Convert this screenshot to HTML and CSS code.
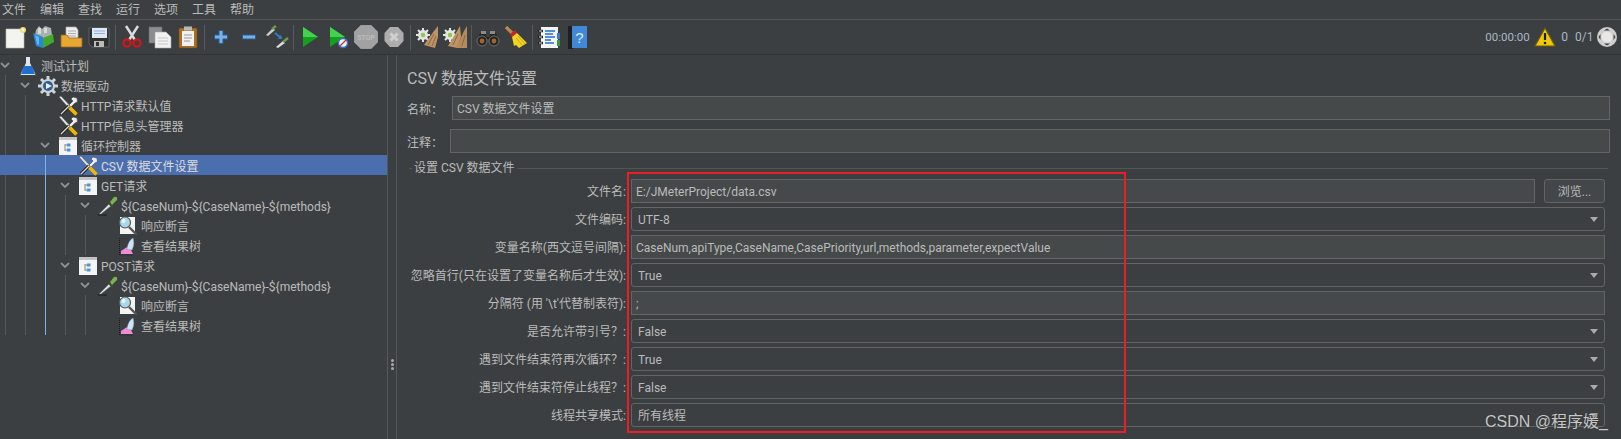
FILE: index.html

```html
<!DOCTYPE html>
<html>
<head>
  <meta charset="UTF-8">
  <title>CSV 数据文件设置</title>
  <link rel="stylesheet" href="styles.css">
</head>
<body>
  <!-- shared icons for the tree -->
  <svg class="defs" width="0" height="0">
    <symbol id="wrench" viewBox="0 0 20 20">
      <path d="M1 1 3 0 18 16 16 18Z" fill="#e6e6e6" stroke="#444" stroke-width=".5"/>
      <path d="M11 10 3 18" stroke="#222" stroke-width="3.200"/>
      <path d="M11 10 3 18" stroke="#d8d8d8" stroke-width="1.300"/>
      <path d="M11 9 15 5 13 3 15 1 19 2 19.500 6 17 7 13 11Z" fill="#ececec" stroke="#444" stroke-width=".6"/>
      <path d="M11.500 11.500 18.500 18.500" stroke="#f2b600" stroke-width="3.600"/>
    </symbol>
    <symbol id="loop" viewBox="0 0 20 20">
      <rect x="1" y="1" width="18" height="18" fill="#f4f4f4"/>
      <rect x="1" y="1" width="18" height="3" fill="#c4c4c4"/>
      <path d="M7 8V15M7 9H10M7 14H10" stroke="#8a8a8a" fill="none"/>
      <rect x="9" y="7.500" width="3.500" height="3" fill="#4795e0"/>
      <rect x="9" y="12.500" width="3.500" height="3" fill="#4795e0"/>
    </symbol>
    <symbol id="sampler" viewBox="0 0 20 20">
      <path d="M0 19H9" stroke="#25282a" stroke-width="1.500"/>
      <path d="M1 18 11 8 13 10 3 18Z" fill="#dde2e4" stroke="#666" stroke-width=".6"/>
      <path d="M10 6 15 11" stroke="#3b4a33" stroke-width="2.200"/>
      <path d="M12 6 16 1Q20 0 19 4L14 9Z" fill="#7cb04e"/>
    </symbol>
    <symbol id="assert" viewBox="0 0 20 20">
      <path d="M2 1H17V18H2Z" fill="#f4f4f4"/>
      <path d="M11 11 18.500 18.500" stroke="#555" stroke-width="2.400"/>
      <circle cx="7" cy="6.500" r="5.500" fill="#a9d8ee" stroke="#5a5a5a" stroke-width="1.200"/>
      <circle cx="5.500" cy="5" r="2" fill="#e6f6fc"/>
    </symbol>
    <symbol id="result" viewBox="0 0 20 20">
      <path d="M1.500 2V19H15" stroke="#1d1d1d" fill="none" stroke-dasharray="1 1"/>
      <path d="M3 18V15L9 11 13 14 15 18Z" fill="#f289d4"/>
      <path d="M9 13Q10 5 15 2Q17 8 14 14Z" fill="#cfe4f6" stroke="#8aa6bd" stroke-width=".5"/>
    </symbol>
    <symbol id="chev" viewBox="0 0 10 6">
      <path d="M1 1 5 5 9 1" stroke="#8d9093" stroke-width="1.800" fill="none"/>
    </symbol>
  </svg>

  <div class="menubar">
    <span>文件</span><span>编辑</span><span>查找</span><span>运行</span><span>选项</span><span>工具</span><span>帮助</span>
  </div>

  <div class="toolbar">
    <div class="tool"><svg viewBox="0 0 24 24"><rect x="3" y="4" width="18" height="19" fill="#f3f3f0" stroke="#bdbdb8" stroke-width=".6"/><circle cx="20" cy="5" r="3" fill="#eedc74"/><circle cx="20" cy="5" r="1.400" fill="#fff9cf"/></svg></div>
    <div class="tool"><svg viewBox="0 0 24 24"><path d="M5 5 8 1 11 4 14 1 20 3 21 10 11 15 4 10Z" fill="#a9b2ad"/><path d="M7 3H10V9H7ZM13 3H16V8H13Z" fill="#d8dcd8"/><path d="M2 8 12 12V23L5 21Z" fill="#2a86d8"/><path d="M4 10 8 12 8 20 6 19Z" fill="#62b8f2"/><path d="M12 13 22 9 23 17 12 23Z" fill="#43a92b"/></svg></div>
    <div class="tool"><svg viewBox="0 0 24 24"><path d="M7 2H17L19 5V14H7Z" fill="#eee" stroke="#aaa" stroke-width=".7"/><path d="M9 6H17M9 8.500H17M9 11H17" stroke="#aaa"/><path d="M2 10H8L10 13H23V21Q23 22 22 22H3Q2 22 2 21Z" fill="#e8a632" stroke="#9b6b14" stroke-width=".8"/></svg></div>
    <div class="tool"><svg viewBox="0 0 24 24"><path d="M2 3H22V22H5L2 19Z" fill="#2f3032" stroke="#777" stroke-width=".6"/><rect x="5" y="3" width="15" height="10" fill="#dfe9f5"/><path d="M7 6H18M7 8.500H18" stroke="#8fb0d6"/><rect x="7" y="16" width="10" height="6" fill="#bbb"/><rect x="9" y="17" width="3" height="4" fill="#333"/></svg></div>
    <div class="sep"></div>
    <div class="tool"><svg viewBox="0 0 24 24"><path d="M6 1 15 15M18 1 9 15" stroke="#dcdcdc" stroke-width="2.400"/><circle cx="7" cy="18" r="3.600" fill="none" stroke="#d8141b" stroke-width="2.200"/><circle cx="17" cy="18" r="3.600" fill="none" stroke="#d8141b" stroke-width="2.200"/></svg></div>
    <div class="tool"><svg viewBox="0 0 24 24"><rect x="1" y="2" width="13" height="16" fill="#8b8d8f" stroke="#6a6a6a" stroke-width=".6"/><path d="M7 7H18L23 12V23H7Z" fill="#f1f1f1" stroke="#a8a8a8" stroke-width=".6"/><path d="M10 13H20M10 16H20M10 19H20" stroke="#c8c8c8"/></svg></div>
    <div class="tool"><svg viewBox="0 0 24 24"><rect x="3" y="3" width="18" height="20" rx="1" fill="#a96f26" stroke="#6d4716" stroke-width=".6"/><path d="M6 6H18V21H6Z" fill="#f1f1f1"/><rect x="8" y="1.500" width="8" height="4" fill="#b9b9b9"/><path d="M8 10H16M8 13H16M8 16H14" stroke="#999"/></svg></div>
    <div class="sep"></div>
    <div class="tool"><svg viewBox="0 0 24 24"><path d="M12 5V19M5 12H19" stroke="#2b5d90" stroke-width="5"/><path d="M12 6V18M6 12H18" stroke="#78b0e8" stroke-width="3"/></svg></div>
    <div class="tool"><svg viewBox="0 0 24 24"><path d="M5 12H19" stroke="#2b5d90" stroke-width="5"/><path d="M6 12H18" stroke="#78b0e8" stroke-width="3"/></svg></div>
    <div class="tool"><svg viewBox="0 0 24 24"><path d="M1 10 8 3 10 5 3 11Z" fill="#ccc"/><path d="M7 4 11 1" stroke="#6b9a4a" stroke-width="2.400"/><path d="M10 8 16 13" stroke="#2f7fd6" stroke-width="1.800"/><path d="M17 14 13 14 16 10Z" fill="#2f7fd6"/><path d="M11 22 18 16 20 18 13 23Z" fill="#ddd"/><path d="M18 17 23 13" stroke="#6b9a4a" stroke-width="2.400"/></svg></div>
    <div class="sep"></div>
    <div class="tool"><svg viewBox="0 0 24 24"><path d="M5 2 20 12 5 22Z" fill="#14a01e"/><path d="M5 2 20 12 5 12Z" fill="#44d24e"/></svg></div>
    <div class="tool"><svg viewBox="0 0 24 24"><path d="M4 2 19 12 4 22Z" fill="#14a01e"/><path d="M4 2 19 12 4 12Z" fill="#44d24e"/><circle cx="17" cy="18" r="4.500" fill="#f2f2f2" stroke="#3774c4" stroke-width="1.400"/><path d="M14 21 20 15" stroke="#c33" stroke-width="1.200"/></svg></div>
    <div class="tool"><svg viewBox="0 0 24 24"><path d="M7 0H17L24 7V17L17 24H7L0 17V7Z" fill="#a2a2a2" stroke="#8e8e8e" stroke-width=".6"/><text x="12" y="14.500" class="stop">STOP</text></svg></div>
    <div class="tool"><svg viewBox="0 0 24 24"><path d="M8 2H16L21.500 8V16L16 22H8L2.500 16V8Z" fill="#adadad"/><path d="M8.500 8.500 15.500 15.500M15.500 8.500 8.500 15.500" stroke="#cfcfcf" stroke-width="3"/></svg></div>
    <div class="sep"></div>
    <div class="tool"><svg viewBox="0 0 24 24"><circle cx="8" cy="10" r="5" fill="#e4e4e4"/><path d="M8 3V17M1 10H15M3 5 13 15M13 5 3 15" stroke="#e4e4e4" stroke-width="2"/><circle cx="8" cy="10" r="2.200" fill="#8cc84a"/><path d="M23 1 19 6 9 20 20 23 23 12Z" fill="#bd9466"/><path d="M13 20 19 9M17 21 21 11" stroke="#8b6840"/></svg></div>
    <div class="tool"><svg viewBox="0 0 24 24"><circle cx="7" cy="10" r="5" fill="#e4e4e4"/><path d="M7 3V17M0 10H14M2 5 12 15M12 5 2 15" stroke="#e4e4e4" stroke-width="2"/><circle cx="7" cy="10" r="2.200" fill="#8cc84a"/><path d="M17 1 14 6 5 21 14 23 18 12Z" fill="#bd9466"/><path d="M24 1 21 6 13 23 24 23Z" fill="#b58a5e"/><path d="M10 20 15 9M19 21 22 10" stroke="#8b6840"/></svg></div>
    <div class="sep"></div>
    <div class="tool"><svg viewBox="0 0 24 24"><path d="M4 8H10V12H14V8H20L23 16H14V14H10V16H1Z" fill="#262626"/><path d="M5 6H10V9H5ZM14 6H19V9H14Z" fill="#8a8a8a"/><circle cx="6" cy="16" r="5" fill="#262626" stroke="#8a8a8a" stroke-width=".7"/><circle cx="18" cy="16" r="5" fill="#262626" stroke="#8a8a8a" stroke-width=".7"/><circle cx="6" cy="16" r="2.400" fill="#a8622c"/><circle cx="18" cy="16" r="2.400" fill="#a8622c"/></svg></div>
    <div class="tool"><svg viewBox="0 0 24 24"><path d="M2 2 9 9" stroke="#b68c4e" stroke-width="3.200"/><path d="M6 9 11 5 13 8 8 12Z" fill="#c8242a"/><path d="M8 12 13 8 23 18 15 23 12 20 10 21Z" fill="#f2d424"/><path d="M12 13 19 21M14 11 21 19" stroke="#c6a417"/></svg></div>
    <div class="sep"></div>
    <div class="tool"><svg viewBox="0 0 24 24"><rect x="4" y="2" width="17" height="21" fill="#f5f5f5"/><rect x="20" y="8" width="3" height="6" fill="#3b78c9"/><rect x="20" y="15" width="3" height="6" fill="#2d9a43"/><path d="M8 6H18M8 9H16M8 12H18M8 15H14M8 18H17" stroke="#1f6fd8" stroke-width="1.300"/><path d="M1 6H6M1 12H6M1 18H6" stroke="#222" stroke-width="2.600"/><path d="M2 6H5M2 12H5M2 18H5" stroke="#ddd"/></svg></div>
    <div class="tool"><svg viewBox="0 0 24 24"><rect x="3" y="1" width="5" height="23" fill="#1d1f20"/><rect x="7" y="1" width="15" height="22" fill="#4288d8"/><text x="14.500" y="18" class="qm">?</text></svg></div>

    <div class="status">
      <span class="clock">00:00:00</span>
      <svg class="warn" viewBox="0 0 22 20"><path d="M11 1 21 19H1Z" fill="#f0c808" stroke="#6b5a10" stroke-width="1.200"/><path d="M11 6V13" stroke="#1c1c1c" stroke-width="2.200"/><circle cx="11" cy="16" r="1.300" fill="#1c1c1c"/></svg>
      <span class="errs">0</span>
      <span class="threads">0/1</span>
      <svg class="globe" viewBox="0 0 20 20"><circle cx="10" cy="10" r="10" fill="#cfcfcf"/><circle cx="10" cy="10" r="5.500" fill="#e8e8e8"/><path d="M7 3.500 10 1.500 13 3.500ZM7 16.500 10 18.500 13 16.500ZM3.500 7 1.500 10 3.500 13ZM16.500 7 18.500 10 16.500 13Z" fill="#444"/></svg>
    </div>
  </div>

  <div class="main">
    <div class="tree">
      <div class="row lv0"><svg class="twist"><use href="#chev"/></svg>
        <svg class="ico" viewBox="0 0 20 20"><path d="M8 1H12V7L17 17Q18 19 16 19H4Q2 19 3 17L8 7Z" fill="#dfe7ee"/><path d="M6 10H14L17 18H3Z" fill="#1f6fd0"/></svg>
        <span>测试计划</span></div>
      <div class="kids k0">
        <div class="row lv1"><svg class="twist"><use href="#chev"/></svg>
          <svg class="ico" viewBox="0 0 20 20"><circle cx="10" cy="10" r="7" fill="#cfd3d6"/><path d="M10 0V20M0 10H20M3 3 17 17M17 3 3 17" stroke="#cfd3d6" stroke-width="3"/><circle cx="10" cy="10" r="5" fill="#2d5f95"/><path d="M8 7 14 10 8 13Z" fill="#eef"/></svg>
          <span>数据驱动</span></div>
        <div class="kids k1">
          <div class="row lv2"><i class="twist"></i><svg class="ico"><use href="#wrench"/></svg><span>HTTP请求默认值</span></div>
          <div class="row lv2"><i class="twist"></i><svg class="ico"><use href="#wrench"/></svg><span>HTTP信息头管理器</span></div>
          <div class="row lv2"><svg class="twist"><use href="#chev"/></svg><svg class="ico"><use href="#loop"/></svg><span>循环控制器</span></div>
          <div class="kids k2 cur">
            <div class="row lv3 sel"><i class="twist"></i><svg class="ico"><use href="#wrench"/></svg><span>CSV 数据文件设置</span></div>
            <div class="row lv3"><svg class="twist"><use href="#chev"/></svg><svg class="ico"><use href="#loop"/></svg><span>GET请求</span></div>
            <div class="kids k3">
              <div class="row lv4"><svg class="twist"><use href="#chev"/></svg><svg class="ico"><use href="#sampler"/></svg><span>${CaseNum}-${CaseName}-${methods}</span></div>
              <div class="kids k4">
                <div class="row lv5"><i class="twist"></i><svg class="ico"><use href="#assert"/></svg><span>响应断言</span></div>
                <div class="row lv5"><i class="twist"></i><svg class="ico"><use href="#result"/></svg><span>查看结果树</span></div>
              </div>
            </div>
            <div class="row lv3"><svg class="twist"><use href="#chev"/></svg><svg class="ico"><use href="#loop"/></svg><span>POST请求</span></div>
            <div class="kids k3">
              <div class="row lv4"><svg class="twist"><use href="#chev"/></svg><svg class="ico"><use href="#sampler"/></svg><span>${CaseNum}-${CaseName}-${methods}</span></div>
              <div class="kids k4">
                <div class="row lv5"><i class="twist"></i><svg class="ico"><use href="#assert"/></svg><span>响应断言</span></div>
                <div class="row lv5"><i class="twist"></i><svg class="ico"><use href="#result"/></svg><span>查看结果树</span></div>
              </div>
            </div>
          </div>
        </div>
      </div>
    </div>

    <div class="split"><i></i><i></i><i></i></div>

    <div class="panel">
      <div class="title">CSV 数据文件设置</div>
      <div class="line name">
        <label>名称：</label>
        <div class="field">CSV 数据文件设置</div>
      </div>
      <div class="line note">
        <label>注释：</label>
        <div class="field"></div>
      </div>

      <fieldset class="group">
        <legend>设置 CSV 数据文件</legend>
        <div class="grid">
          <label>文件名:</label>
          <div class="pick">
            <div class="field">E:/JMeterProject/data.csv</div>
            <div class="btn">浏览...</div>
          </div>
          <label>文件编码:</label>
          <div class="combo">UTF-8</div>
          <label>变量名称(西文逗号间隔):</label>
          <div class="field">CaseNum,apiType,CaseName,CasePriority,url,methods,parameter,expectValue</div>
          <label>忽略首行(只在设置了变量名称后才生效):</label>
          <div class="combo">True</div>
          <label>分隔符 (用 '\t'代替制表符):</label>
          <div class="field">;</div>
          <label>是否允许带引号？:</label>
          <div class="combo">False</div>
          <label>遇到文件结束符再次循环？:</label>
          <div class="combo">True</div>
          <label>遇到文件结束符停止线程？:</label>
          <div class="combo">False</div>
          <label>线程共享模式:</label>
          <div class="combo">所有线程</div>
        </div>
      </fieldset>
    </div>
  </div>

  <!-- annotation drawn on top of the screenshot -->
  <div class="redbox"></div>
  <div class="mark">CSDN @程序媛_</div>
</body>
</html>
```

FILE: styles.css

```css
html,body{height:100%;}
body{
  margin:0;background:#3c3f41;color:#bbb;overflow:hidden;position:relative;
  font:12px/16px Roboto,"Noto Sans CJK SC",sans-serif;
}
.defs{position:absolute;}

/* menu */
.menubar{display:flex;gap:14px;height:19px;padding-left:2px;align-items:center;border-bottom:1px solid #555;}
.menubar span{width:24px;white-space:nowrap;}

/* toolbar */
.toolbar{display:flex;align-items:center;height:34px;padding-left:1px;border-bottom:1px solid #323435;}
.tool{width:28px;height:24px;display:flex;justify-content:center;}
.tool svg{width:24px;height:24px;}
.sep{width:1px;height:25px;margin:0 2px;background:#565a5c;}
.stop{font:bold 6.500px "Liberation Sans",sans-serif;fill:#bcbcbc;text-anchor:middle;}
.qm{font:15px "Liberation Sans",sans-serif;fill:#dcebfb;text-anchor:middle;}

.status{margin-left:auto;display:flex;align-items:center;padding-right:4px;color:#a9b7c6;}
.clock{width:42px;white-space:nowrap;font-size:11.500px;}
.warn{width:22px;height:20px;margin-left:7px;}
.errs{margin-left:5px;}
.threads{margin-left:7px;width:18px;}
.globe{width:20px;height:20px;margin-left:4px;}

/* tree */
.main{display:flex;height:384px;}
.tree{width:387px;flex:none;}
.row{display:flex;align-items:center;height:20px;white-space:nowrap;}
.row span{padding-top:4px;}
.row.sel{background:#4b6eaf;color:#ddd;}
.twist{width:10px;height:6px;margin-right:8px;flex:none;}
.ico{width:20px;height:20px;margin:2px 3px 0 0;flex:none;}
.lv1{padding-left:20px;}
.lv2{padding-left:40px;}
.lv3{padding-left:60px;}
.lv4{padding-left:80px;}
.lv5{padding-left:100px;}

.kids{position:relative;}
.kids::before{content:"";position:absolute;top:0;bottom:0;width:1px;background:#55585a;}
.k0::before{left:5px;}
.k1::before{left:25px;}
.k2::before{left:45px;}
.k3::before{left:65px;}
.k4::before{left:85px;}
.cur::before{background:#7fb4e8;}

/* divider */
.split{
  width:8px;flex:none;display:flex;flex-direction:column;gap:1px;align-items:center;justify-content:center;
  border-left:1px solid #55585a;border-right:1px solid #55585a;
  padding-top:235px;height:149px;
}
.split i{width:3px;height:3px;border-radius:50%;background:#aaa;}

/* form */
.panel{flex:1;min-width:0;padding:0 11px 0 10px;}
.title{font-size:16px;line-height:20px;margin-top:14px;}
.line{display:flex;align-items:center;height:24px;}
.line label{white-space:nowrap;padding-top:3px;}
.name{margin-top:7px;}
.name label{width:45px;flex:none;}
.note{margin-top:9px;}
.note label{width:43px;flex:none;}
.field{
  flex:1;min-width:0;height:24px;line-height:24px;box-sizing:border-box;padding:0 4px;
  background:#45494a;border:1px solid #646464;white-space:nowrap;overflow:hidden;
}

.group{border:0;border-top:1px solid #555;margin:8px 2px 0;padding:0;min-width:0;}
.group legend{padding:0 2px;margin-left:3px;line-height:14px;}
.grid{display:grid;grid-template-columns:217px 1fr;column-gap:5px;row-gap:4px;margin-top:4px;padding-right:3px;grid-auto-rows:24px;}
.grid label{text-align:right;line-height:26px;white-space:nowrap;}
.pick{display:flex;gap:9px;min-width:0;}
.btn{
  width:61px;flex:none;height:24px;line-height:24px;box-sizing:border-box;text-align:center;
  border:1px solid #646464;border-radius:3px;background:#43474a;
}
.combo{
  position:relative;height:24px;line-height:24px;box-sizing:border-box;padding:0 6px;
  border:1px solid #646464;border-radius:3px;
}
.combo::after{
  content:"";position:absolute;right:6px;top:9px;
  border:4px solid transparent;border-top:5px solid #aaa;border-bottom:0;
}

/* overlays */
.redbox{position:absolute;left:627px;top:172px;width:495px;height:257px;border:2px solid #ee1c25;}
.mark{
  position:absolute;right:13px;top:411px;font:16px/22px "Liberation Sans","Noto Sans CJK SC",sans-serif;
  color:#c8c8c8;text-shadow:0 0 1px #222;white-space:nowrap;
}
```
